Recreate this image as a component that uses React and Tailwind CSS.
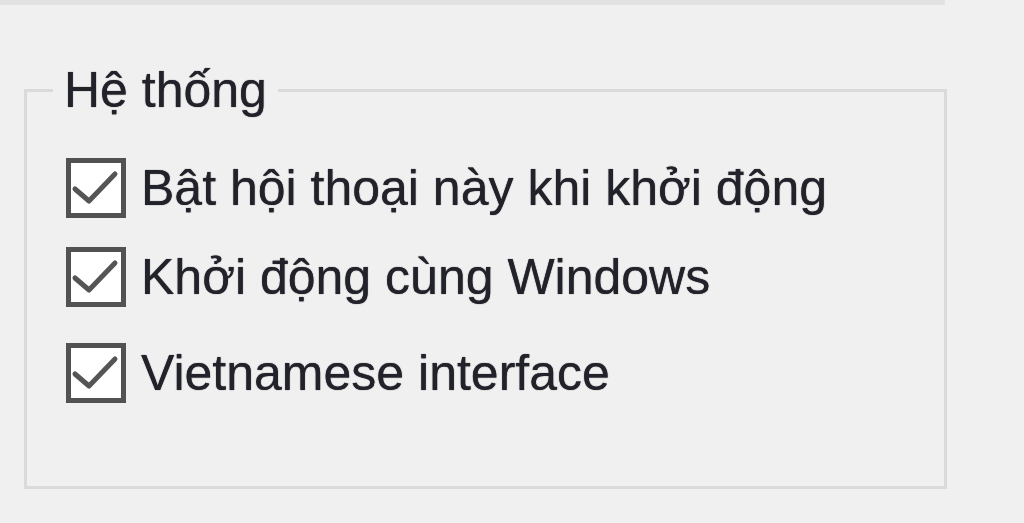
import React from "react";

function Check({ label, className = "" }) {
  return (
    <div className={"flex items-center " + className}>
      <div className="w-[60px] h-[60px] border-[5px] border-[#525252] bg-white flex items-center justify-center shrink-0">
        <svg width="50" height="50" viewBox="0 0 50 50" className="block">
          <path d="M4 26 L18 38 L44 11" fill="none" stroke="#555555" strokeWidth="5" strokeLinecap="round" strokeLinejoin="round" />
        </svg>
      </div>
      <span className="ml-[15px] text-[50px] leading-[58px] text-[#22222a] whitespace-nowrap [text-shadow:0_0_1px_#22222a]">{label}</span>
    </div>
  );
}

export default function App() {
  return (
    <div className="w-[1024px] h-[523px] bg-[#f0f0f0] overflow-hidden" style={{ fontFamily: '"Liberation Sans", Arial, sans-serif' }}>
      <div className="w-[945px] h-[5px] bg-[#e2e2e2]" />
      <fieldset className="ml-[24px] mt-[56px] w-[923px] h-[428px] border-[3px] border-[#dadada]">
        <legend className="ml-[26px] px-[11px] text-[50px] leading-[58px] text-[#22222a] [text-shadow:0_0_1px_#22222a]">Hệ thống</legend>
        <div className="pl-[39px] pt-[39px] flex flex-col">
          <Check label="Bật hội thoại này khi khởi động" />
          <Check label="Khởi động cùng Windows" className="mt-[29px]" />
          <Check label="Vietnamese interface" className="mt-[36px]" />
        </div>
      </fieldset>
    </div>
  );
}
